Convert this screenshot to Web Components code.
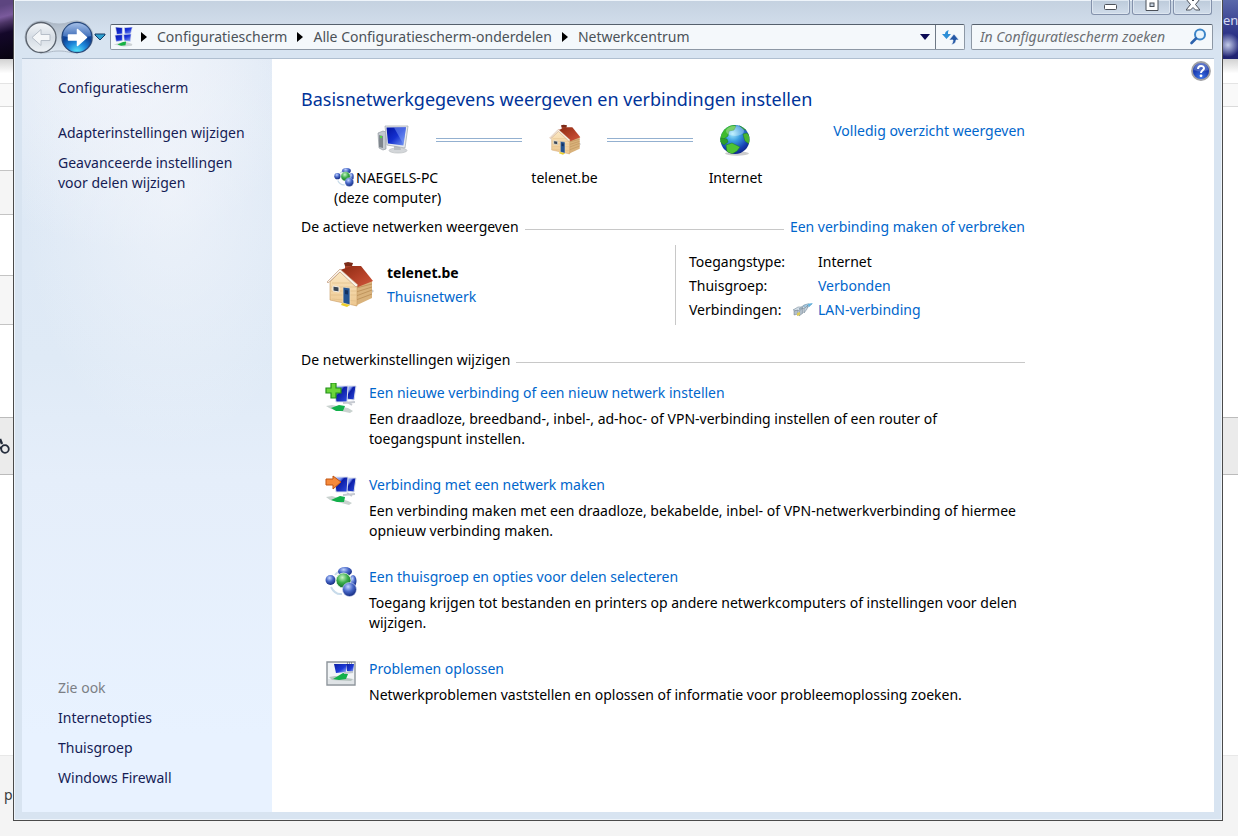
<!DOCTYPE html>
<html lang="nl">
<head>
<meta charset="utf-8">
<title>Netwerkcentrum</title>
<style>
  html, body { margin: 0; }
  body {
    min-height: 100vh;
    background: #f4f4f4;
    font: 14px/20px "Noto Sans", "Open Sans", sans-serif;
    color: #000;
  }
</style>
</head>
<body>
<desktop-view></desktop-view>

<script>
const ICONS = {
  network: ['0 0 32 32', `
    <defs><linearGradient id="s" x1="0" y1="0" x2="1" y2="1"><stop offset="0" stop-color="#0516a8"/><stop offset=".55" stop-color="#1a32d8"/><stop offset="1" stop-color="#8fa4f2"/></linearGradient></defs>
    <g stroke="#dfe4ee" stroke-width="1"><path d="M4 0l11 1v10l-9 1zM18 1l13-1-3 12-9-1z" fill="url(#s)"/><path d="M3 13l12-1v10l-10 1zM17 12l12-1-1 12-10-1z" fill="url(#s)"/></g>
    <path d="M1 28l10-3 10-1 10 3-1 3-13 1z" fill="#cdd3d6"/><path d="M7 28l9-4 5-1-1 6-7 1z" fill="#17b244"/>`],
  pc: ['0 0 32 32', `
    <defs><linearGradient id="s" x1="0" y1="0" x2="1" y2="1"><stop offset="0" stop-color="#0213a0"/><stop offset=".5" stop-color="#1430cf"/><stop offset="1" stop-color="#7da0f5"/></linearGradient></defs>
    <path d="M1 9l5-2 3 1v17l-3 1-4-2z" fill="#c4c9cf" stroke="#888f96" stroke-width=".6"/><path d="M2 11l4 1v12l-4-1z" fill="#7f868d"/><circle cx="4" cy="13" r="1.2" fill="#51d642"/>
    <ellipse cx="21" cy="26.500" rx="9" ry="2.600" fill="#d3d6d9" stroke="#a9adb1" stroke-width=".5"/><path d="M17 22h6l1 4h-7z" fill="#b8bdc1"/>
    <path d="M8 2l23 0-3 22-18-3z" fill="#e6e9ec" stroke="#9ea5ad" stroke-width=".7"/><path d="M9.500 3.500l19.500-.2-2.600 18.200L11 19.500z" fill="url(#s)"/><path d="M17 3.500l12-.2-2.600 17z" fill="#8cadff" opacity=".45"/>`],
  house: ['0 0 48 48', `
    <defs><linearGradient id="r" x1="0" y1="0" x2="1" y2="1"><stop offset="0" stop-color="#8c2a12"/><stop offset=".6" stop-color="#b8432a"/><stop offset="1" stop-color="#d0583c"/></linearGradient>
    <linearGradient id="w" x1="0" y1="0" x2="0" y2="1"><stop offset="0" stop-color="#fbe8c4"/><stop offset="1" stop-color="#edc78f"/></linearGradient></defs>
    <path d="M44 27l4 3-4 4z" fill="#999" opacity=".5"/>
    <path d="M19 3l3-1 4 1v6l-7 1z" fill="#a8432b"/><path d="M18 2l4-1 5 1-1 3h-7z" fill="#7b2a17"/>
    <path d="M30 22l16-3v18L29 45z" fill="#d9b27b"/><path d="M30 27l16-4M30 31l16-5M30 35l16-6M30 39l16-6" stroke="#b98d55" stroke-width=".8"/>
    <path d="M4 21L15 10l16 14v21L4 39z" fill="url(#w)" stroke="#c79b62" stroke-width=".6"/><path d="M6 22h22M5 26h26M5 30h26M5 34h26M6 38l24 2" stroke="#e0bd87" stroke-width=".7"/>
    <path d="M14 9L26 5 35 5 47 20 32 26z" fill="url(#r)"/><path d="M1 21L14 8l18 16-2 2L14 11 2 22z" fill="#faf4ea" stroke="#b88c6a" stroke-width=".6"/>
    <path d="M7 25l6 1v5l-6-1z" fill="#3b4654" stroke="#f5f1e8"/><path d="M17 26l7 1v17l-7-2z" fill="#235392" stroke="#f0dcba" stroke-width=".8"/><path d="M19 29l3 .5v4l-3-.5z" fill="#12305f"/>
    <path d="M16 42l8 2-3 2-6-2z" fill="#eccf2c"/>`],
  globe: ['0 0 32 32', `
    <defs><radialGradient id="g" cx=".42" cy=".3" r=".75"><stop offset="0" stop-color="#a6ecff"/><stop offset=".35" stop-color="#3a9de0"/><stop offset=".75" stop-color="#1740b4"/><stop offset="1" stop-color="#0c2080"/></radialGradient><clipPath id="c"><circle cx="15" cy="15.500" r="14.500"/></clipPath></defs>
    <ellipse cx="17" cy="29.500" rx="12" ry="2.200" fill="#000" opacity=".2"/><circle cx="15" cy="15.500" r="14.500" fill="url(#g)"/>
    <g clip-path="url(#c)" stroke="#1a7d22" stroke-width=".5"><path d="M2 5l9-5 5 2-2 4-5 1-1 5-4 3 0 2-4 1-2-5z" fill="#3fbb2d"/><path d="M19 1l5 1 4 5-5-2z" fill="#36ad2c"/><path d="M23 10l4-1 4 5-2 6-4-3-1-3z" fill="#4ab531"/><path d="M0 14l7 1 1 3-4 3-4-3z" fill="#2d9e2a"/><path d="M6 21l6-2 8 4-3 4-5 3-5-2z" fill="#4ec335"/></g>
    <ellipse cx="15" cy="7" rx="9" ry="5" fill="#fff" opacity=".3"/>`],
  homegroup: ['0 0 32 32', `
    <defs><radialGradient id="b" cx=".4" cy=".3" r=".7"><stop offset="0" stop-color="#c3d4ff"/><stop offset=".5" stop-color="#4868c8"/><stop offset="1" stop-color="#142a80"/></radialGradient>
    <radialGradient id="g" cx=".42" cy=".3" r=".7"><stop offset="0" stop-color="#c9f5c6"/><stop offset=".5" stop-color="#3cae4a"/><stop offset="1" stop-color="#0d6a26"/></radialGradient></defs>
    <path d="M6 20q4 8 11 7M10 8q3-4 8-5" fill="none" stroke="#c8dbea" stroke-width="2"/>
    <ellipse cx="20" cy="4.500" rx="7" ry="4.500" fill="url(#b)"/><ellipse cx="28" cy="14" rx="3.500" ry="6" fill="url(#b)"/>
    <circle cx="5.500" cy="13" r="5" fill="url(#b)"/><circle cx="18.500" cy="13.500" r="7.500" fill="url(#g)" stroke="#e8f5ea" stroke-width=".8"/><circle cx="24.500" cy="22.500" r="7" fill="url(#b)" stroke="#dde6fa" stroke-width=".6"/>`],
  add: ['0 0 32 32', `
    <defs><linearGradient id="s" x1="0" y1="0" x2="1" y2="1"><stop offset="0" stop-color="#b5c8ff"/><stop offset=".3" stop-color="#7d94ee"/><stop offset=".42" stop-color="#0c1ea8"/><stop offset="1" stop-color="#2f4fe0"/></linearGradient></defs>
    <path d="M22 3l9 0-2 14-8-1z" fill="url(#s)" stroke="#d7dce8"/><path d="M9 3l14 0-1 16-11 0z" fill="url(#s)" stroke="#dfe3ef"/>
    <path d="M18 20l12-1M22 19l5 3" stroke="#c6cad1" stroke-width="2"/><path d="M1 23l6-1 16 3 5 3-3 2-19-4z" fill="#c9d2cf"/><path d="M6 25l8-3 6 1-2 5-7 0z" fill="#12b04a"/>
    <path d="M6 0h5v5h5v5h-5v5H6v-5H1V5h5z" fill="#6bd53a" stroke="#22901a" stroke-width="1.200"/>`],
  connect: ['0 0 32 32', `
    <defs><linearGradient id="s" x1="0" y1="0" x2="1" y2="1"><stop offset="0" stop-color="#b5c8ff"/><stop offset=".3" stop-color="#7d94ee"/><stop offset=".42" stop-color="#0c1ea8"/><stop offset="1" stop-color="#2f4fe0"/></linearGradient></defs>
    <path d="M22 3l9 0-2 14-8-1z" fill="url(#s)" stroke="#d7dce8"/><path d="M9 2l14 0-1 15-11 0z" fill="url(#s)" stroke="#dfe3ef"/>
    <path d="M18 20l12-1M22 18l5 3" stroke="#c6cad1" stroke-width="2"/><path d="M1 22l6-1 16 5 4 2-3 2-19-5z" fill="#c9d2cf"/><path d="M6 25l9-4 5 1-1 5-7 0z" fill="#12b04a"/>
    <path d="M1 4h7V1l8 6-8 7v-4H1z" fill="#f68a3a" stroke="#c05512" stroke-width="1"/>`],
  trouble: ['0 0 32 32', `
    <defs><linearGradient id="s" x1="0" y1="0" x2="1" y2="1"><stop offset="0" stop-color="#0a1da0"/><stop offset=".6" stop-color="#1e3bd8"/><stop offset="1" stop-color="#a6baf8"/></linearGradient></defs>
    <path d="M2 3h28v23H2z" fill="#f1f4f6" stroke="#8d949b" stroke-width="1.400"/><path d="M3 20h26v5H3z" fill="#dfe3e6"/>
    <path d="M9 5h12v8L11 14z" fill="url(#s)"/><path d="M21 5h8l-1 8-6-1z" fill="url(#s)"/><path d="M22 4h6" stroke="#4f5663" stroke-dasharray="1 1"/>
    <path d="M4 18l6-1 18 3-2 2-19-1z" fill="#b8c4c0"/><path d="M8 20l10-6 5 1-2 5-7 1z" fill="#12b04a"/><path d="M19 14l9-1" stroke="#c2c7cf" stroke-width="2"/>`],
  lan: ['0 0 20 14', `
    <path d="M0 7l5-3h5l-5 4zM6 6l5-4 5-1-6 5z" fill="#d3dee7" stroke="#7b8e9e" stroke-width=".6"/><path d="M10 3l4-2h5l-5 4z" fill="#a9cfe6" stroke="#7295ad" stroke-width=".5"/><path d="M1 8l4-1v4l-4 1zM6 8l4-3v5l-4 3z" fill="#b2bfca" stroke="#6a7987" stroke-width=".5"/><path d="M11 6l4-4-1 4-3 4z" fill="#c3d0da" stroke="#66798b" stroke-width=".5"/><path d="M4 10l3-1v3l-3 1z" fill="#dccb58"/><path d="M15 1l5-1-4 4z" fill="#63b5e2"/>`],
  nav: ['0 0 72 34', `
    <defs><linearGradient id="p" x1="0" y1="0" x2="0" y2="1"><stop offset="0" stop-color="#aab6c4"/><stop offset="1" stop-color="#e2ebf4"/></linearGradient>
    <linearGradient id="b" x1="0" y1="0" x2="0" y2="1"><stop offset="0" stop-color="#f3f6f9"/><stop offset=".5" stop-color="#d5dce4"/><stop offset="1" stop-color="#eef2f6"/></linearGradient>
    <radialGradient id="f" cx=".5" cy="1" r=".95"><stop offset="0" stop-color="#5cf0ff"/><stop offset=".35" stop-color="#1c86da"/><stop offset=".65" stop-color="#0d3f93"/><stop offset="1" stop-color="#386cc0"/></radialGradient>
    <linearGradient id="h" x1="0" y1="0" x2="0" y2="1"><stop offset="0" stop-color="#c5d8f3"/><stop offset="1" stop-color="#4878c4"/></linearGradient></defs>
    <path d="M17 1c8 0 9 3 18 3S45 1 53 1a16 16 0 0 1 0 32c-8 0-9-2-18-2s-10 2-18 2A16 16 0 0 1 17 1z" fill="url(#p)" stroke="#aeb9c6"/>
    <circle cx="17" cy="17.500" r="15" fill="url(#b)" stroke="#59616c" stroke-width="1.300"/><path d="M8 17.500l9-8v5h9v6h-9v5z" fill="#f4f6f8" stroke="#b6bec8"/>
    <circle cx="53" cy="17.500" r="15" fill="url(#f)" stroke="#27487c" stroke-width="1.300"/><path d="M39 16a14 13 0 0 1 28 0q-14 4-28 0z" fill="url(#h)" opacity=".75"/>
    <path d="M62.500 17.500l-9-8v5.500h-9v5h9v5.500z" fill="#fff" stroke="#fff" stroke-linejoin="round" stroke-width="1.500"/>`],
  recent: ['0 0 12 8', `<path d="M1 1h10v1L6 7 1 2z" fill="#2ea0cf" stroke="#143a66"/>`],
  crumb: ['0 0 6 10', `<path d="M0 0l6 5-6 5z" fill="#000"/>`],
  down: ['0 0 10 6', `<path d="M0 0h10L5 6z" fill="#0a0a55"/>`],
  refresh: ['0 0 18 18', `<path d="M8 2C5 3 4 4 4 6H1l4.500 5L10 6H7c0-2 0-3 1-4z" fill="#2d8ed6"/><path d="M10 17c4-1 5-3 5-5h3l-5-6-5 6h4c0 2-1 4-2 5z" fill="#2458a6" stroke="#f4f8fb" stroke-width=".7"/>`],
  search: ['0 0 18 18', `<circle cx="11" cy="6.500" r="5" fill="#e9f5fd" stroke="#3c85c8" stroke-width="2"/><path d="M7 10.500L2.500 15" stroke="#2c62ad" stroke-width="2.600" stroke-linecap="round"/>`],
  help: ['0 0 20 20', `
    <defs><radialGradient id="q" cx=".5" cy=".85" r=".8"><stop offset="0" stop-color="#3d74e8"/><stop offset=".6" stop-color="#1a3bb0"/><stop offset="1" stop-color="#3b59c2"/></radialGradient></defs>
    <circle cx="10" cy="10" r="9" fill="url(#q)" stroke="#a0a0a4" stroke-width="1.800"/><path d="M3 9a7 7 0 0 1 14 0q-7 3-14 0z" fill="#fff" opacity=".2"/>
    <path d="M7 8c0-4 6-4 6-.7 0 2-3 2-3 4.700" fill="none" stroke="#fff" stroke-width="2"/><circle cx="10" cy="14.800" r="1.400" fill="#fff"/>`],
  min: ['0 0 14 8', `<rect x=".5" y="1.500" width="12" height="5" rx="1" fill="#fff" stroke="#4b5058"/>`],
  max: ['0 0 14 14', `<path d="M1 -1h12v11.500H1z" fill="#fff" stroke="#4b5058"/><rect x="5" y="3" width="4" height="3.500" fill="#c7d2e0" stroke="#4b5058"/>`],
  close: ['0 0 14 14', `<path d="M0 -1h5l2 2 2-2h5L9.500 4.500 14 10H9.500L7 7.500 4.500 10H0l4.500-5.500z" fill="#fff" stroke="#4b5058"/>`],
  chain: ['0 0 10 18', `<path d="M0 2l2 5M0 11q3 0 4-3" fill="none" stroke="#222a38" stroke-width="2.400"/><circle cx="5" cy="12" r="3.800" fill="#ebebeb" stroke="#252d3c" stroke-width="1.800"/>`]
};

const define = (name, css, html, ready) => {
  const template = document.createElement('template');
  template.innerHTML = `<style>*{box-sizing:border-box}${css}</style>${html}`;
  customElements.define(name, class extends HTMLElement {
    constructor() {
      super();
      this.attachShadow({ mode: 'open' }).append(template.content.cloneNode(true));
    }
    connectedCallback() { if (ready) ready.call(this, this.shadowRoot); }
  });
};

define('ui-icon', `
  :host { display: block; flex: none; line-height: 0; }
  svg { display: block; width: 100%; height: 100%; }`, '', function (root) {
  const [box, art] = ICONS[this.getAttribute('name')];
  const holder = document.createElement('template');
  holder.innerHTML = `<svg viewBox="${box}" aria-hidden="true">${art}</svg>`;
  root.querySelector('svg')?.remove();
  root.append(holder.content);
});

define('text-link', `
  :host { display: inline; color: #0066cc; }
  a { color: inherit; text-decoration: none; }
  a:hover { text-decoration: underline; }`, '<a href="#"><slot></slot></a>');

define('caption-buttons', `
  :host { display: flex; justify-content: flex-end; gap: 2px; height: 15px; padding-right: 2px; }
  button { width: 39px; height: 15px; padding: 0; display: flex; justify-content: center; align-items: flex-end;
    border: 1px solid #8391ab; border-top: 0; border-radius: 0 0 3px 3px;
    background: linear-gradient(#bccada, #d0dcea); box-shadow: inset 0 0 0 1px #dde6f0; }
  ui-icon { width: 14px; height: 14px; }
  .min { height: 8px; margin-bottom: 3px; }`, `
  <button aria-label="Minimaliseren"><ui-icon class="min" name="min"></ui-icon></button>
  <button aria-label="Maximaliseren"><ui-icon name="max"></ui-icon></button>
  <button aria-label="Sluiten"><ui-icon name="close"></ui-icon></button>`);

define('address-bar', `
  :host { display: flex; flex: 1; height: 26px; color: #4b5258; background: #f4f8fb;
    border: 1px solid #8d98a5; border-top-color: #55606d; border-radius: 2px; }
  nav { display: flex; flex: 1; align-items: center; gap: 10px; padding-left: 2px; }
  button { font: inherit; color: inherit; padding: 0; border: 0; background: none; }
  .home { width: 20px; height: 20px; margin-right: -2px; }
  .arrow { width: 6px; height: 10px; }
  .drop { display: flex; align-items: center; padding: 0 5px; }
  .drop ui-icon { width: 10px; height: 6px; }
  .refresh { display: flex; align-items: center; justify-content: center; width: 29px; border-left: 1px solid #6e7986; }
  .refresh ui-icon { width: 18px; height: 18px; }`, `
  <nav aria-label="Adres">
    <ui-icon class="home" name="network"></ui-icon>
    <ui-icon class="arrow" name="crumb"></ui-icon><button>Configuratiescherm</button>
    <ui-icon class="arrow" name="crumb"></ui-icon><button>Alle Configuratiescherm-onderdelen</button>
    <ui-icon class="arrow" name="crumb"></ui-icon><button>Netwerkcentrum</button>
  </nav>
  <button class="drop" aria-label="Vorige locaties"><ui-icon name="down"></ui-icon></button>
  <button class="refresh" aria-label="Vernieuwen"><ui-icon name="refresh"></ui-icon></button>`);

define('search-box', `
  :host { display: flex; align-items: center; width: 242px; height: 26px; padding: 0 5px 0 8px; background: #f4f8fb;
    border: 1px solid #8d98a5; border-top-color: #55606d; border-radius: 2px; }
  input { flex: 1; min-width: 0; padding: 0; border: 0; outline: 0; background: none; font: inherit; font-style: italic; }
  input::placeholder { color: #6b6f73; opacity: 1; }
  ui-icon { width: 18px; height: 18px; }`, `
  <input type="search" aria-label="Zoeken" placeholder="In Configuratiescherm zoeken"><ui-icon name="search"></ui-icon>`);

define('nav-toolbar', `
  :host { display: flex; align-items: center; height: 43px; padding: 0 1px 0 2px; }
  .travel { display: grid; grid-template-columns: 36px 36px; height: 34px; }
  .travel ui-icon { grid-area: 1 / 1 / 2 / 3; }
  .back { grid-area: 1 / 1; }
  .forward { grid-area: 1 / 2; }
  .recent { width: 12px; height: 8px; margin-right: 2px; }
  address-bar { margin-left: 2px; }
  search-box { margin-left: 6px; }
  button { border: 0; padding: 0; background: none; }
  .travel ui-icon { width: 72px; height: 34px; }
  .recent-button { margin-left: -2px; }`, `
  <div class="travel"><ui-icon name="nav"></ui-icon><button class="back" aria-label="Vorige"></button><button class="forward" aria-label="Volgende"></button></div>
  <button class="recent-button" aria-label="Recente pagina's"><ui-icon class="recent" name="recent"></ui-icon></button>
  <address-bar></address-bar><search-box></search-box>`);

define('side-panel', `
  :host { display: flex; flex-direction: column; gap: 10px; flex: none; width: 250px; padding: 19px 24px 24px 36px;
    background:
      radial-gradient(ellipse 150px 260px at 150px 130px, rgba(242,245,251,.7), rgba(242,245,251,0)),
      radial-gradient(circle at 100px 0, #f2f5fb, rgba(242,245,251,0) 190px),
      linear-gradient(#dce7f4, #dfeaf6 300px, #e5eefa 420px, #e8f2ff 90%); }
  text-link { display: block; color: #151c55; }
  .home { margin-bottom: 15px; }
  h2 { margin: auto 0 0; font: inherit; color: #7c7f85; }`, `
  <text-link class="home">Configuratiescherm</text-link>
  <text-link>Adapterinstellingen wijzigen</text-link>
  <text-link>Geavanceerde instellingen voor delen wijzigen</text-link>
  <h2>Zie ook</h2>
  <text-link>Internetopties</text-link>
  <text-link>Thuisgroep</text-link>
  <text-link>Windows Firewall</text-link>`);

define('map-node', `
  :host { display: flex; flex-direction: column; align-items: center; gap: 12px; width: 85px; }
  .art { display: flex; }
  .label { white-space: nowrap; }
  :host([wide]) { width: 102px; align-items: flex-start; }
  :host([wide]) .art { margin-left: 43px; }`, `
  <div class="art"><slot name="icon"></slot></div><div class="label"><slot></slot></div>`);

define('network-map', `
  :host { display: flex; padding-left: 33px; }
  .line { width: 86px; height: 4px; margin-top: 14px; border: solid #93b0d0; border-width: 1px 0; }
  ui-icon { width: 32px; height: 32px; }
  .name { display: flex; gap: 2px; align-items: center; }
  .name ui-icon { width: 20px; height: 20px; }
  .overview { margin: -3px 0 0 auto; }`, `
  <map-node wide><ui-icon slot="icon" name="pc"></ui-icon>
    <div class="name"><ui-icon name="homegroup"></ui-icon>NAEGELS-PC</div><div>(deze computer)</div></map-node>
  <div class="line"></div>
  <map-node><ui-icon slot="icon" name="house"></ui-icon>telenet.be</map-node>
  <div class="line"></div>
  <map-node><ui-icon slot="icon" name="globe"></ui-icon>Internet</map-node>
  <text-link class="overview">Volledig overzicht weergeven</text-link>`);

define('section-heading', `
  :host { display: flex; align-items: center; gap: 6px; }
  h2 { margin: 0; font: inherit; }
  .rule { flex: 1; height: 1px; margin-top: 4px; background: #c8c8c8; }`, `
  <h2><slot></slot></h2><div class="rule"></div><slot name="action"></slot>`);

define('active-network', `
  :host { display: flex; height: 80px; }
  .who { display: flex; flex: 1; gap: 13px; padding: 16px 0 0 25px; line-height: 24px; }
  .who ui-icon { width: 48px; height: 48px; }
  .who text-link { display: block; }
  .facts { width: 350px; padding: 5px 0 0 13px; border-left: 1px solid #c8c8c8; }
  table { border-collapse: collapse; line-height: 24px; }
  th, td { padding: 0; font-weight: 400; text-align: left; }
  th { width: 104px; }
  .pic { width: 25px; }
  .pic ui-icon { width: 20px; height: 14px; }`, `
  <div class="who"><ui-icon name="house"></ui-icon><div><b>telenet.be</b><text-link>Thuisnetwerk</text-link></div></div>
  <div class="facts"><table>
    <tr><th scope="row">Toegangstype:</th><td class="pic"></td><td>Internet</td></tr>
    <tr><th scope="row">Thuisgroep:</th><td class="pic"></td><td><text-link>Verbonden</text-link></td></tr>
    <tr><th scope="row">Verbindingen:</th><td class="pic"><ui-icon name="lan"></ui-icon></td><td><text-link>LAN-verbinding</text-link></td></tr>
  </table></div>`);

define('task-item', `
  :host { display: flex; gap: 12px; padding-left: 24px; }
  ::slotted(ui-icon) { width: 32px; height: 32px; }
  p { margin: 6px 0 0; }
  .text { flex: 1; min-width: 0; }`, `
  <slot name="icon"></slot><div class="text"><text-link><slot name="title"></slot></text-link><p><slot></slot></p></div>`);

define('network-center', `
  :host { display: flex; flex: 1; min-width: 0; align-items: flex-start; justify-content: space-between; background: #fff; padding: 0 3px 24px 29px; }
  main { flex: 1; max-width: 724px; padding-top: 28px; }
  h1 { margin: 0 0 13px; font-size: 18px; line-height: 24px; font-weight: 400; color: #003399; }
  network-map { margin-bottom: 9px; }
  active-network { margin: 8px 0 25px; }
  .tasks { display: grid; gap: 26px; margin-top: 13px; }
  .help { margin-top: 2px; padding: 0; border: 0; background: none; }
  .help ui-icon { width: 20px; height: 20px; }`, `
  <main>
    <h1>Basisnetwerkgegevens weergeven en verbindingen instellen</h1>
    <network-map></network-map>
    <section-heading>De actieve netwerken weergeven<text-link slot="action">Een verbinding maken of verbreken</text-link></section-heading>
    <active-network></active-network>
    <section-heading>De netwerkinstellingen wijzigen</section-heading>
    <div class="tasks">
      <task-item><ui-icon slot="icon" name="add"></ui-icon><span slot="title">Een nieuwe verbinding of een nieuw netwerk instellen</span>Een draadloze, breedband-, inbel-, ad-hoc- of VPN-verbinding instellen of een router of toegangspunt instellen.</task-item>
      <task-item><ui-icon slot="icon" name="connect"></ui-icon><span slot="title">Verbinding met een netwerk maken</span>Een verbinding maken met een draadloze, bekabelde, inbel- of VPN-netwerkverbinding of hiermee opnieuw verbinding maken.</task-item>
      <task-item><ui-icon slot="icon" name="homegroup"></ui-icon><span slot="title">Een thuisgroep en opties voor delen selecteren</span>Toegang krijgen tot bestanden en printers op andere netwerkcomputers of instellingen voor delen wijzigen.</task-item>
      <task-item><ui-icon slot="icon" name="trouble"></ui-icon><span slot="title">Problemen oplossen</span>Netwerkproblemen vaststellen en oplossen of informatie voor probleemoplossing zoeken.</task-item>
    </div>
  </main>
  <button class="help" aria-label="Help"><ui-icon name="help"></ui-icon></button>`);

define('explorer-window', `
  :host { display: flex; flex-direction: column; min-width: 0; margin-bottom: 15px; padding: 0 8px 8px;
    border: 1px solid #4a4a4a; border-top: 0; box-shadow: inset 0 0 0 1px #eef4fa;
    background: linear-gradient(#c4d1e0, #d8e4f1 40px); }
  .body { display: flex; flex: 1; border-top: 1px solid #b0bfd0; }`, `
  <caption-buttons></caption-buttons>
  <nav-toolbar></nav-toolbar>
  <div class="body"><side-panel></side-panel><network-center></network-center></div>`);

define('page-edge', `
  :host { display: flex; flex-direction: column; overflow: hidden; background: #fff; color: #3a3a3a; }
  .hero { height: 59px; background: linear-gradient(165deg, #5d4580 0 10%, #7a5a9c 28%, #4c3566 38%, #14082a 55%, #07030f); }
  .fade { height: 25px; background: linear-gradient(#d2d2d2, #fff 60%); border-bottom: 1px solid #e4e4e4; }
  .bar { height: 23px; background: #f9f9f9; border-bottom: 1px solid #dadada; }
  .gap { height: 64px; border-bottom: 1px solid #c4c4c4; }
  .shade { height: 44px; background: #f5f5f5; border-bottom: 1px solid #c4c4c4; }
  .row { height: 61px; border-bottom: 1px solid #c4c4c4; }
  .row.alt { height: 49px; background: #f6f6f6; }
  .rest { height: 92px; }
  .band { display: flex; align-items: center; height: 58px; background: #ebebeb; border: solid #bbb; border-width: 1px 0; }
  .band ui-icon { width: 10px; height: 18px; }
  .blank { height: 281px; border-bottom: 1px solid #e8e8e8; }
  .foot { flex: 1; padding: 29px 0 0 4px; background: #f4f4f4; }
  .plain { height: 310px; }
  :host([side="right"]) .hero { padding-top: 10px; font-size: 13px; color: #d5daf2; background: radial-gradient(circle at 5px 45px, #c3cbe8, rgba(130,145,200,0) 12px), linear-gradient(#5a68aa, #2b3186 60%, #1f2270); }
  :host([side="right"]) .left, :host([side="left"]) .right { display: none; }`, `
  <div class="hero"><span class="right">en</span></div>
  <div class="fade"></div><div class="bar"></div>
  <div class="left"><div class="gap"></div><div class="shade"></div><div class="row"></div><div class="row alt"></div><div class="rest"></div></div>
  <div class="right plain"></div>
  <div class="band"><ui-icon class="left" name="chain"></ui-icon></div>
  <div class="blank"></div>
  <div class="foot"><span class="left">p</span></div>`);

define('desktop-view', `
  :host { display: grid; grid-template-columns: 13px minmax(0, 1fr) 15px; min-height: 100vh; }`, `
  <page-edge side="left"></page-edge><explorer-window></explorer-window><page-edge side="right"></page-edge>`);
</script>
</body>
</html>
